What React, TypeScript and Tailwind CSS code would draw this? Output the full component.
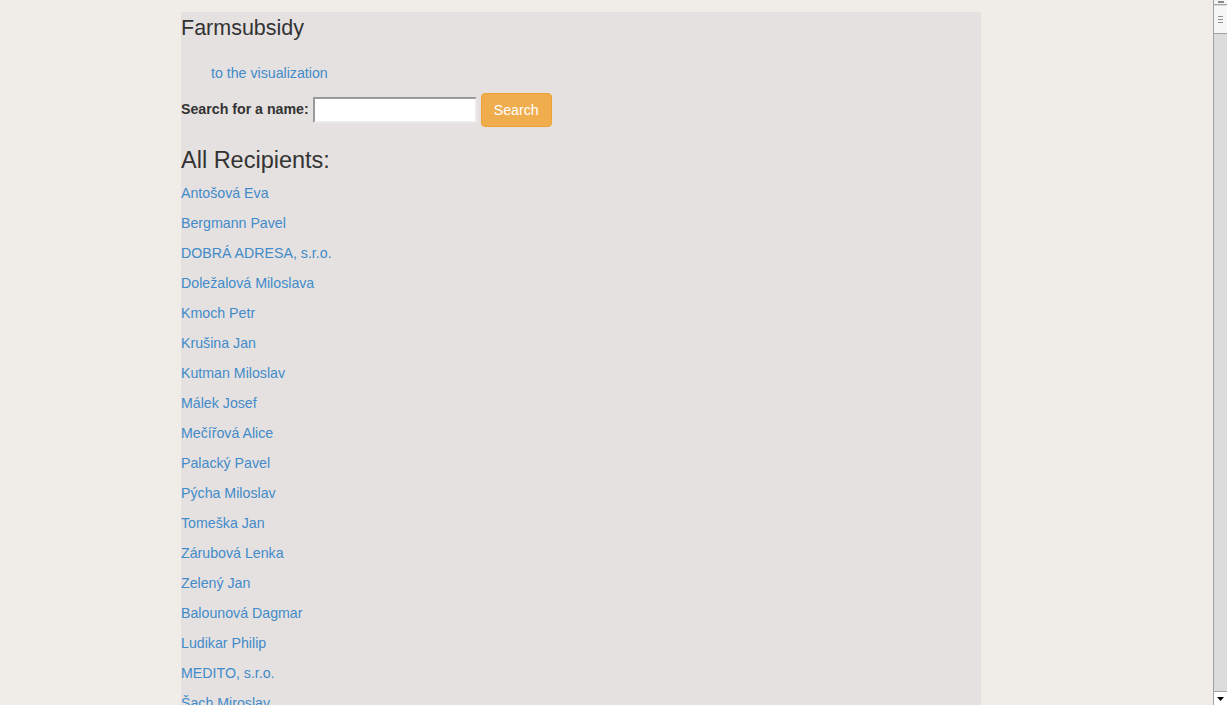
import React from 'react';

const recipients = [
  'Antošová Eva',
  'Bergmann Pavel',
  'DOBRÁ ADRESA, s.r.o.',
  'Doležalová Miloslava',
  'Kmoch Petr',
  'Krušina Jan',
  'Kutman Miloslav',
  'Málek Josef',
  'Mečířová Alice',
  'Palacký Pavel',
  'Pýcha Miloslav',
  'Tomeška Jan',
  'Zárubová Lenka',
  'Zelený Jan',
  'Balounová Dagmar',
  'Ludikar Philip',
  'MEDITO, s.r.o.',
  'Šach Miroslav',
  'Novák Jan',
];

const Scrollbar: React.FC = () => (
  <div className="w-[14px] h-full flex flex-col border-l border-[#a3a3a3] bg-[#dcdcdc] shrink-0">
    <div className="h-[5px] bg-[#f4f4f4] border-b border-[#a3a3a3] flex justify-center">
      <div className="w-[6px] h-[2px] bg-[#8a8a8a] mt-[1px]" />
    </div>
    <div className="h-[28px] mt-[1px] bg-[#f6f6f6] border-b border-[#a3a3a3] flex flex-col items-center justify-center gap-[2px]">
      <div className="w-[5px] h-px bg-[#8f8f8f]" />
      <div className="w-[5px] h-px bg-[#8f8f8f]" />
      <div className="w-[5px] h-px bg-[#8f8f8f]" />
    </div>
    <div className="flex-1" />
    <div className="h-[14px] bg-white border-t border-[#a3a3a3] flex items-center justify-center">
      <svg width="7" height="4" viewBox="0 0 7 4">
        <polygon points="0,0 7,0 3.5,4" fill="#000" />
      </svg>
    </div>
  </div>
);

export default function App() {
  return (
    <div
      className="h-[705px] w-full overflow-hidden flex bg-[#f0ede8] text-[#333] text-[14.2px]"
      style={{ fontFamily: '"Liberation Sans", Arial, sans-serif' }}
    >
      <div className="flex-1 min-w-0">
        <div className="ml-[181px] mt-[12px] w-[800px] bg-[#e5e1e0] min-h-[800px]">
          <h1 className="text-[21.5px] leading-[23px] font-normal pt-[5px]">Farmsubsidy</h1>

          <ul className="mt-[23px] pl-[30px] leading-[20px]">
            <li>
              <a href="#" className="text-[#428bca]">to the visualization</a>
            </li>
          </ul>

          <form className="mt-[10px] flex items-center h-[34px]">
            <label className="font-bold mr-[4px]">Search for a name:</label>
            <input
              type="text"
              className="w-[164px] h-[26px] bg-white border-2 border-t-[#9a9a9a] border-l-[#9a9a9a] border-b-[#ececec] border-r-[#ececec] outline-none"
            />
            <button
              type="button"
              className="ml-[4px] h-[34px] px-[12px] rounded-[4px] bg-[#f0ad4e] border border-[#eea236] text-white leading-[20px]"
            >
              Search
            </button>
          </form>

          <h3 className="mt-[20px] text-[23.5px] leading-[26px] font-normal">All Recipients:</h3>

          <div className="mt-[10px]">
            {recipients.map((name, index) => (
              <p key={index} className="leading-[20px] mb-[10px]">
                <a href="#" className="text-[#428bca]">{name}</a>
              </p>
            ))}
          </div>
        </div>
      </div>
      <Scrollbar />
    </div>
  );
}
